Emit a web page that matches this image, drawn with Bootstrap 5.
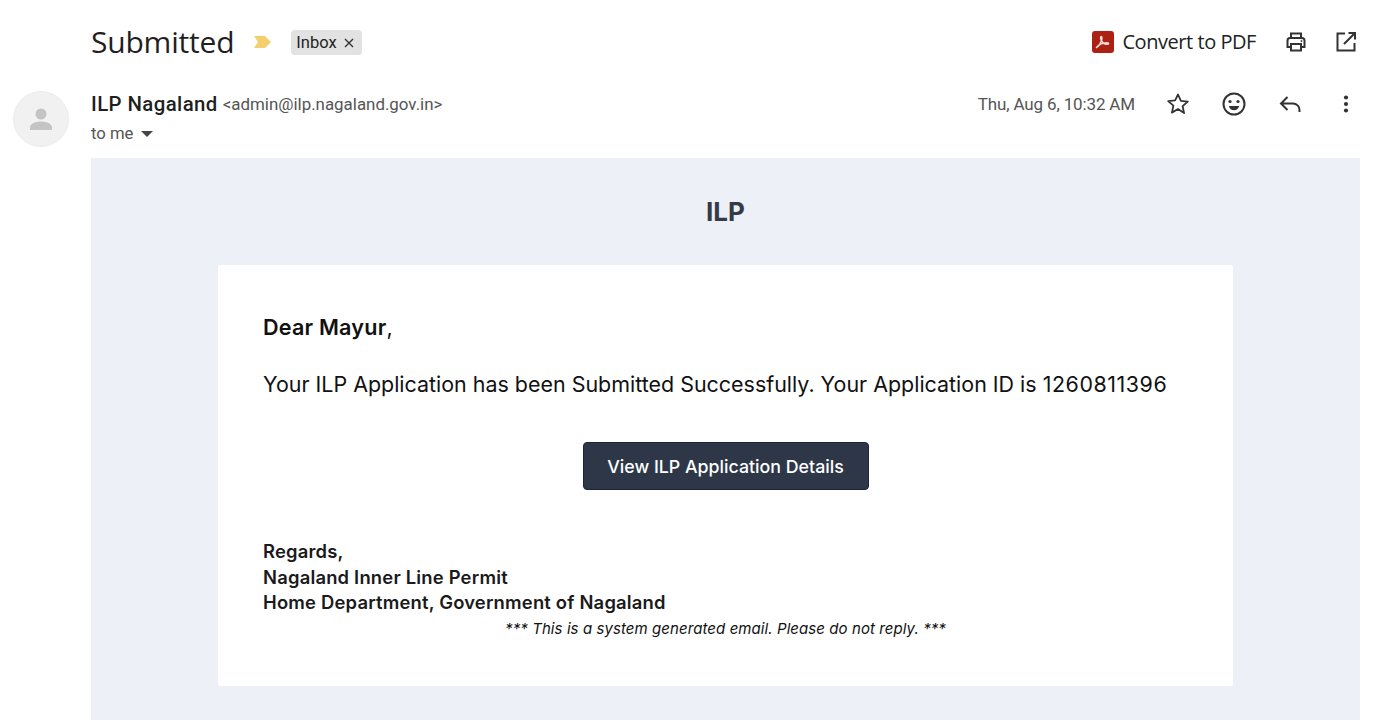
<!DOCTYPE html>
<html lang="en">
<head>
<meta charset="utf-8">
<title>Submitted</title>
<link href="https://cdn.jsdelivr.net/npm/bootstrap@5.3.0/dist/css/bootstrap.min.css" rel="stylesheet">
<style>
html,body{height:720px;overflow:hidden;background:#fff}
body{font-family:Roboto,"Liberation Sans",sans-serif;color:#222}
.subject-bar{height:84px;padding:0 29px 0 91px}
.subject-text{font-family:"Open Sans",Roboto,sans-serif;font-size:30px;line-height:1;color:#1f1f1f;letter-spacing:-.2px;font-weight:400}
.marker{margin-left:19px;margin-right:19px}
.inbox-chip{background:#e2e2e2;border-radius:4px;height:25px;width:71px;font-size:16.5px;color:#222;padding:2px 0 0 5px}
.chip-x{margin-left:7px}
.pdf-text{font-size:20px;color:#222;margin-left:8px;margin-right:28px;font-family:"Open Sans",Roboto,sans-serif;letter-spacing:-.45px}
.print-icon{margin-right:26px}
.sender-row{height:74px}
.avatar-col{width:91px;padding-left:13px;padding-top:7px}
.avatar-disc{width:56px;height:56px;border-radius:50%;background:#f1f1f1;border:1px solid #ececec}
.sender-main{padding-top:6px}
.sender-name{font-size:20.4px;font-weight:500;color:#1f1f1f;letter-spacing:.4px;line-height:28px}
.sender-mail{font-size:16.9px;color:#555;margin-left:5px;vertical-align:1px}
.to-me{font-size:16.7px;color:#555;line-height:28px;margin-top:2px}
.mail-date{font-size:17px;color:#555;margin-right:31px;letter-spacing:-.15px;padding-top:2px}
.meta-side{padding-right:36px;height:28px;margin-top:6px}
.row-icon{margin-right:32px}
.row-icon-last{margin-right:39px}
.mail-panel{margin-left:91px;margin-right:27px;background:#edf0f7;height:562px;padding-top:36px;font-family:Inter,"Liberation Sans",sans-serif}
.panel-title{font-size:26px;font-weight:700;color:#333b47;line-height:36px;text-align:center;margin:0 0 35px}
.mail-card{width:1015px;height:421px;margin:0 auto;background:#fff;border-radius:2px;padding:47px 45px 0;color:#111}
.greet{font-size:21.6px;line-height:30px;margin-bottom:27px;letter-spacing:.2px}
.greet b{font-weight:600}
.mail-line{font-size:21.45px;line-height:30px;margin-bottom:43px;white-space:nowrap}
.app-id{letter-spacing:.55px}
.cta{background:#2d3748;color:#fff;border:1px solid #1a2535;border-radius:4px;width:286px;height:48px;font-size:17.8px;font-weight:500;padding:0;line-height:48px}
.cta-wrap{margin-bottom:49px}
.regards{font-size:18.4px;font-weight:600;line-height:25.5px;color:#1a1a1a;letter-spacing:.2px}
.disclaimer{font-size:15px;font-style:italic;text-align:center;line-height:25px;color:#111;letter-spacing:.08px}
</style>
</head>
<body>
<div class="subject-bar d-flex align-items-center">
  <h1 class="subject-text mb-0">Submitted</h1>
  <svg class="marker" width="19" height="14" viewBox="0 0 19 14"><path d="M1 1h11l6 6-6 6H1l4-6z" fill="#f4cf6b"/></svg>
  <span class="inbox-chip d-inline-flex align-items-center">Inbox<svg class="chip-x" width="10" height="10" viewBox="0 0 10 10"><path d="M1 1l8 8M9 1l-8 8" stroke="#333" stroke-width="1.4"/></svg></span>
  <div class="ms-auto d-flex align-items-center">
    <svg width="22" height="22" viewBox="0 0 22 22"><rect width="22" height="22" rx="3" fill="#ad2114"/><path d="M4.500 16.500c2-1 3.800-3.800 5-7 .6-1.700.6-4-.3-4s-.8 2.400.3 4.300c1.200 2 3.200 3.300 5 3.500 1.800.1 2.500-.7 1.900-1.200-.8-.6-4-.3-6.500.5-2.600.9-4.500 2.400-5.400 3.900z" fill="none" stroke="#f7dcd8" stroke-width="1.500" stroke-linejoin="round"/></svg>
    <span class="pdf-text">Convert to PDF</span>
    <svg class="print-icon" width="24" height="24" viewBox="0 0 24 24" fill="none" stroke="#333" stroke-width="2"><path d="M7 8V3.500h10V8"/><path d="M7 17H3.500v-6.500A2.500 2.500 0 0 1 6 8h12a2.500 2.500 0 0 1 2.500 2.500V17H17"/><rect x="7" y="14" width="10" height="6.500"/><circle cx="17.500" cy="11" r=".6" fill="#333" stroke-width="1"/></svg>
    <svg width="24" height="24" viewBox="0 0 24 24" fill="none" stroke="#333" stroke-width="2"><path d="M11 3.500H3.500v17h17V13"/><path d="M10 14L21 3M14.500 3H21v6.500"/></svg>
  </div>
</div>
<div class="sender-row d-flex">
  <div class="avatar-col">
    <div class="avatar-disc d-flex align-items-center justify-content-center">
      <svg width="26" height="26" viewBox="0 0 26 26" fill="#c4c4c4"><circle cx="13" cy="8" r="5.500"/><path d="M2 21.500c0-4 6-6 11-6s11 2 11 6V24H2z"/></svg>
    </div>
  </div>
  <div class="sender-main">
    <div><span class="sender-name">ILP Nagaland</span><span class="sender-mail">&lt;admin@ilp.nagaland.gov.in&gt;</span></div>
    <div class="to-me d-flex align-items-center">to me<svg class="ms-2" width="12" height="6" viewBox="0 0 12 6"><path d="M0 0h12L6 6z" fill="#444"/></svg></div>
  </div>
  <div class="ms-auto d-flex align-items-center meta-side">
    <span class="mail-date">Thu, Aug 6, 10:32 AM</span>
    <svg class="row-icon" width="24" height="24" viewBox="0 0 24 24" fill="none" stroke="#333" stroke-width="1.800" stroke-linejoin="round"><path d="M12 2.500l2.900 6.400 6.900.7-5.200 4.600 1.500 6.900L12 17l-6.100 3.600 1.500-6.900-5.200-4.600 6.900-.7z"/></svg>
    <svg class="row-icon" width="24" height="24" viewBox="0 0 24 24" fill="none" stroke="#333" stroke-width="2"><circle cx="12" cy="12" r="10.500"/><circle cx="8" cy="9.500" r="1.600" fill="#333" stroke="none"/><circle cx="16" cy="9.500" r="1.600" fill="#333" stroke="none"/><path d="M6.800 14h10.400c-.7 2.800-2.700 4.300-5.200 4.300S7.500 16.800 6.800 14z" fill="#333" stroke="none"/></svg>
    <svg class="row-icon-last" width="24" height="24" viewBox="0 0 24 24" fill="none" stroke="#333" stroke-width="2"><path d="M9.500 5L3 11.500 9.500 18M3 11.500h12a6.500 6.500 0 0 1 6.500 6.500v2"/></svg>
    <svg width="10" height="24" viewBox="0 0 10 24" fill="#333"><circle cx="5" cy="5.500" r="2.100"/><circle cx="5" cy="12" r="2.100"/><circle cx="5" cy="18.500" r="2.100"/></svg>
  </div>
</div>
<div class="mail-panel">
  <h2 class="panel-title">ILP</h2>
  <div class="mail-card">
    <p class="greet"><b>Dear Mayur</b>,</p>
    <p class="mail-line">Your ILP Application has been Submitted Successfully. Your Application ID is <span class="app-id">1260811396</span></p>
    <div class="text-center cta-wrap"><a class="btn cta" href="#">View ILP Application Details</a></div>
    <div class="regards">Regards,<br>Nagaland Inner Line Permit<br>Home Department, Government of Nagaland</div>
    <div class="disclaimer">*** This is a system generated email. Please do not reply. ***</div>
  </div>
</div>
<script src="https://cdn.jsdelivr.net/npm/bootstrap@5.3.0/dist/js/bootstrap.bundle.min.js"></script>
</body>
</html>
